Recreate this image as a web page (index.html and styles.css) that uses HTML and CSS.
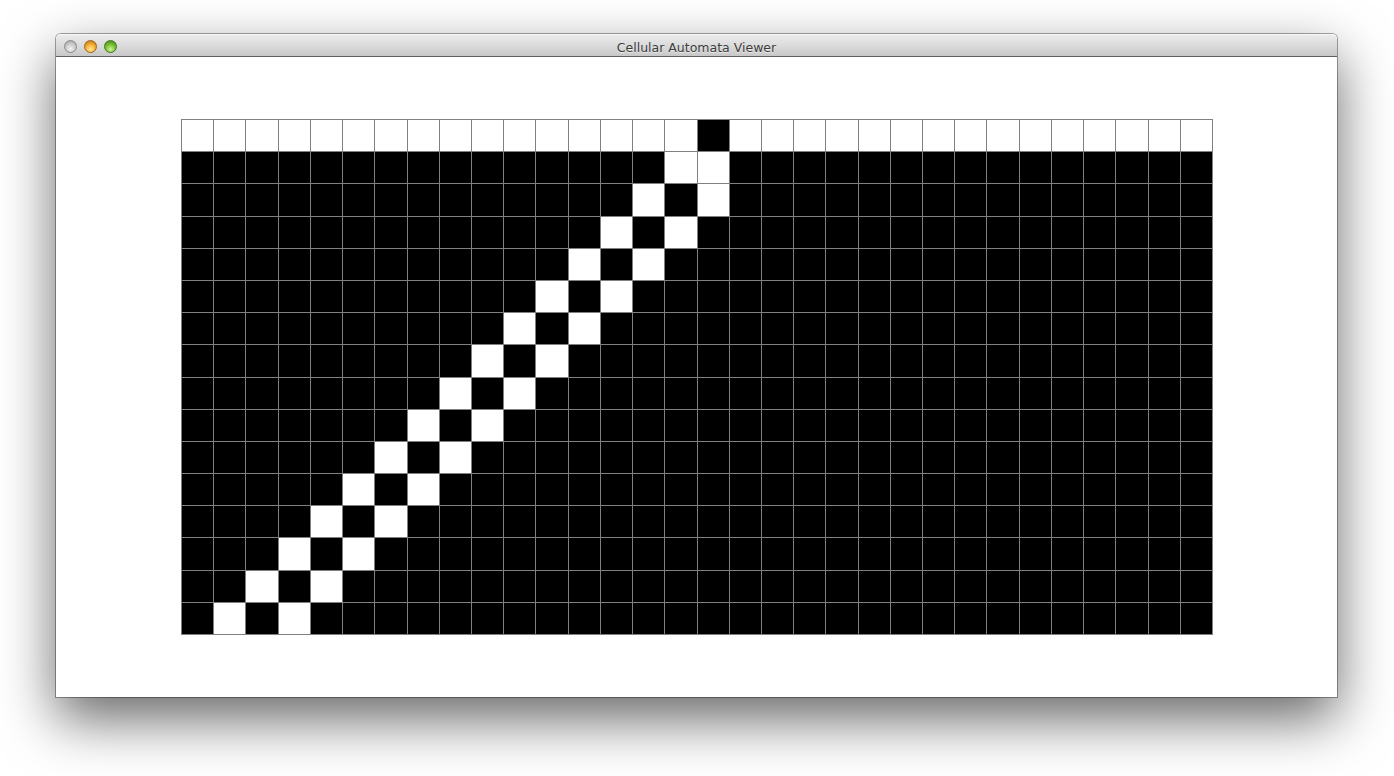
FILE: index.html
```html
<!DOCTYPE html>
<html>
<head>
<meta charset="utf-8">
<title>Cellular Automata Viewer</title>
<link rel="stylesheet" href="styles.css">
</head>
<body>
<div class="window">
  <div class="titlebar">
    <div class="lights">
      <span class="light grey"></span>
      <span class="light orange"></span>
      <span class="light green"></span>
    </div>
    <div class="title">Cellular Automata Viewer</div>
  </div>
  <div class="content">
    <div class="grid">
<i class="w"></i><i class="w"></i><i class="w"></i><i class="w"></i><i class="w"></i><i class="w"></i><i class="w"></i><i class="w"></i><i class="w"></i><i class="w"></i><i class="w"></i><i class="w"></i><i class="w"></i><i class="w"></i><i class="w"></i><i class="w"></i><i></i><i class="w"></i><i class="w"></i><i class="w"></i><i class="w"></i><i class="w"></i><i class="w"></i><i class="w"></i><i class="w"></i><i class="w"></i><i class="w"></i><i class="w"></i><i class="w"></i><i class="w"></i><i class="w"></i><i class="w"></i>
<i></i><i></i><i></i><i></i><i></i><i></i><i></i><i></i><i></i><i></i><i></i><i></i><i></i><i></i><i></i><i class="w"></i><i class="w"></i><i></i><i></i><i></i><i></i><i></i><i></i><i></i><i></i><i></i><i></i><i></i><i></i><i></i><i></i><i></i>
<i></i><i></i><i></i><i></i><i></i><i></i><i></i><i></i><i></i><i></i><i></i><i></i><i></i><i></i><i class="w"></i><i></i><i class="w"></i><i></i><i></i><i></i><i></i><i></i><i></i><i></i><i></i><i></i><i></i><i></i><i></i><i></i><i></i><i></i>
<i></i><i></i><i></i><i></i><i></i><i></i><i></i><i></i><i></i><i></i><i></i><i></i><i></i><i class="w"></i><i></i><i class="w"></i><i></i><i></i><i></i><i></i><i></i><i></i><i></i><i></i><i></i><i></i><i></i><i></i><i></i><i></i><i></i><i></i>
<i></i><i></i><i></i><i></i><i></i><i></i><i></i><i></i><i></i><i></i><i></i><i></i><i class="w"></i><i></i><i class="w"></i><i></i><i></i><i></i><i></i><i></i><i></i><i></i><i></i><i></i><i></i><i></i><i></i><i></i><i></i><i></i><i></i><i></i>
<i></i><i></i><i></i><i></i><i></i><i></i><i></i><i></i><i></i><i></i><i></i><i class="w"></i><i></i><i class="w"></i><i></i><i></i><i></i><i></i><i></i><i></i><i></i><i></i><i></i><i></i><i></i><i></i><i></i><i></i><i></i><i></i><i></i><i></i>
<i></i><i></i><i></i><i></i><i></i><i></i><i></i><i></i><i></i><i></i><i class="w"></i><i></i><i class="w"></i><i></i><i></i><i></i><i></i><i></i><i></i><i></i><i></i><i></i><i></i><i></i><i></i><i></i><i></i><i></i><i></i><i></i><i></i><i></i>
<i></i><i></i><i></i><i></i><i></i><i></i><i></i><i></i><i></i><i class="w"></i><i></i><i class="w"></i><i></i><i></i><i></i><i></i><i></i><i></i><i></i><i></i><i></i><i></i><i></i><i></i><i></i><i></i><i></i><i></i><i></i><i></i><i></i><i></i>
<i></i><i></i><i></i><i></i><i></i><i></i><i></i><i></i><i class="w"></i><i></i><i class="w"></i><i></i><i></i><i></i><i></i><i></i><i></i><i></i><i></i><i></i><i></i><i></i><i></i><i></i><i></i><i></i><i></i><i></i><i></i><i></i><i></i><i></i>
<i></i><i></i><i></i><i></i><i></i><i></i><i></i><i class="w"></i><i></i><i class="w"></i><i></i><i></i><i></i><i></i><i></i><i></i><i></i><i></i><i></i><i></i><i></i><i></i><i></i><i></i><i></i><i></i><i></i><i></i><i></i><i></i><i></i><i></i>
<i></i><i></i><i></i><i></i><i></i><i></i><i class="w"></i><i></i><i class="w"></i><i></i><i></i><i></i><i></i><i></i><i></i><i></i><i></i><i></i><i></i><i></i><i></i><i></i><i></i><i></i><i></i><i></i><i></i><i></i><i></i><i></i><i></i><i></i>
<i></i><i></i><i></i><i></i><i></i><i class="w"></i><i></i><i class="w"></i><i></i><i></i><i></i><i></i><i></i><i></i><i></i><i></i><i></i><i></i><i></i><i></i><i></i><i></i><i></i><i></i><i></i><i></i><i></i><i></i><i></i><i></i><i></i><i></i>
<i></i><i></i><i></i><i></i><i class="w"></i><i></i><i class="w"></i><i></i><i></i><i></i><i></i><i></i><i></i><i></i><i></i><i></i><i></i><i></i><i></i><i></i><i></i><i></i><i></i><i></i><i></i><i></i><i></i><i></i><i></i><i></i><i></i><i></i>
<i></i><i></i><i></i><i class="w"></i><i></i><i class="w"></i><i></i><i></i><i></i><i></i><i></i><i></i><i></i><i></i><i></i><i></i><i></i><i></i><i></i><i></i><i></i><i></i><i></i><i></i><i></i><i></i><i></i><i></i><i></i><i></i><i></i><i></i>
<i></i><i></i><i class="w"></i><i></i><i class="w"></i><i></i><i></i><i></i><i></i><i></i><i></i><i></i><i></i><i></i><i></i><i></i><i></i><i></i><i></i><i></i><i></i><i></i><i></i><i></i><i></i><i></i><i></i><i></i><i></i><i></i><i></i><i></i>
<i></i><i class="w"></i><i></i><i class="w"></i><i></i><i></i><i></i><i></i><i></i><i></i><i></i><i></i><i></i><i></i><i></i><i></i><i></i><i></i><i></i><i></i><i></i><i></i><i></i><i></i><i></i><i></i><i></i><i></i><i></i><i></i><i></i><i></i>
    </div>
  </div>
</div>
</body>
</html>
```

FILE: styles.css
```css
html, body {
  margin: 0;
  padding: 0;
  background: #ffffff;
}
body {
  width: 1394px;
  height: 776px;
  overflow: hidden;
  padding: 34px 0 0 56px;
  box-sizing: border-box;
}
.window {
  width: 1281px;
  height: 663px;
  display: flex;
  flex-direction: column;
  background: #ffffff;
  border-radius: 5px 5px 0 0;
  box-shadow: 0 0 0 1px rgba(0,0,0,0.35), 0 22px 55px rgba(0,0,0,0.6);
}
.titlebar {
  height: 22px;
  flex: none;
  display: flex;
  align-items: center;
  position: relative;
  border-radius: 5px 5px 0 0;
  background: linear-gradient(#ececec 0%, #dcdcdc 50%, #c8c8c8 100%);
  border-bottom: 1px solid #5f5f5f;
  box-shadow: inset 0 1px 0 #f8f8f8;
}
.lights {
  display: flex;
  gap: 7px;
  padding-left: 8px;
  padding-top: 2px;
}
.light {
  width: 13px;
  height: 13px;
  border-radius: 50%;
  box-sizing: border-box;
}
.light.grey {
  background: radial-gradient(circle at 50% 70%, #f2f2f2 0%, #cfcfcf 45%, #9e9e9e 100%);
  border: 1px solid #8a8a8a;
}
.light.orange {
  background: radial-gradient(circle at 50% 75%, #ffe89a 0%, #f6b43a 45%, #b86d10 100%);
  border: 1px solid #a26414;
}
.light.green {
  background: radial-gradient(circle at 50% 75%, #cff59a 0%, #7ec43a 45%, #3b7e12 100%);
  border: 1px solid #3f7a1b;
}
.title {
  position: absolute;
  left: 0;
  right: 0;
  top: 2px;
  line-height: 23px;
  text-align: center;
  font-family: "DejaVu Sans", "Liberation Sans", sans-serif;
  font-size: 12.5px;
  color: #3c3c3c;
  text-shadow: 0 1px 0 rgba(255,255,255,0.6);
}
.content {
  flex: 1;
  display: flex;
  align-items: center;
  justify-content: center;
  padding-left: 1px;
}
.grid {
  width: 1032px;
  height: 516px;
  box-sizing: border-box;
  padding: 1px;
  gap: 1px;
  background: #808080;
  display: grid;
  grid-template-columns: repeat(32, 1fr);
  grid-template-rows: repeat(16, 1fr);
}
.grid i {
  display: block;
  background: #000000;
}
.grid i.w {
  background: #ffffff;
}
```
